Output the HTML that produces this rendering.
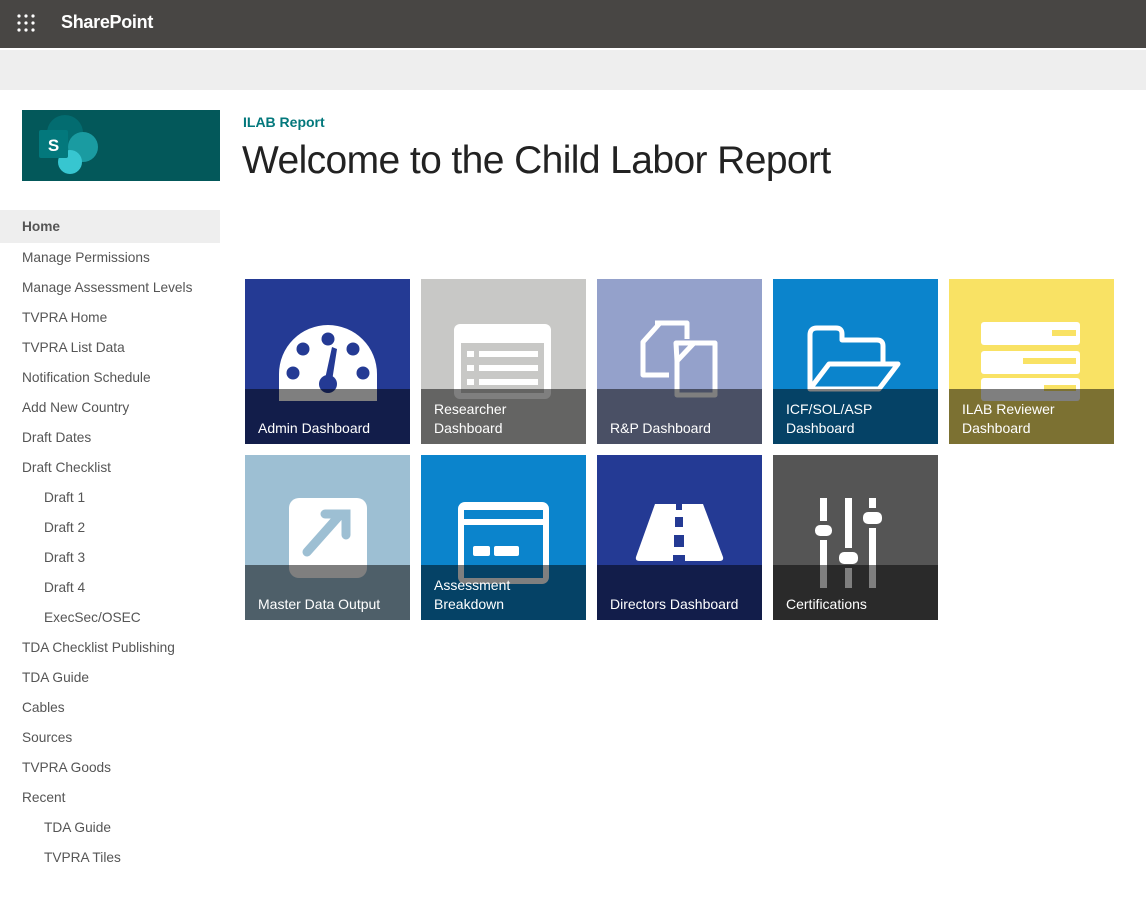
<!DOCTYPE html>
<html><head><meta charset="utf-8"><style>
*{margin:0;padding:0;box-sizing:border-box}
body{width:1146px;height:897px;background:#fff;font-family:"Liberation Sans",sans-serif;position:relative;overflow:hidden}
.top{position:absolute;left:0;top:0;width:1146px;height:48px;background:#484644}
.bar{position:absolute;left:0;top:50px;width:1146px;height:40px;background:#eeeeee}
.logo{position:absolute;left:22px;top:110px;width:198px;height:71px;background:#03585a}
.nav{position:absolute;left:0;top:210px;width:220px}
.nav div{height:30px;line-height:30px;font-size:13.7px;color:#555;padding-left:22px}
.nav div.home{background:#eeeeee;font-weight:bold;color:#555;height:33px;line-height:33px}
.nav div.sub{padding-left:44px}
.tile{position:absolute;width:165px;height:165px;overflow:hidden}
.tile svg{position:absolute;left:0;top:0}
.ov{position:absolute;left:0;top:110px;width:165px;height:55px;background:rgba(0,0,0,0.5);color:#fff;font-size:14px;line-height:19px;padding:0 13px 6px;display:flex;align-items:flex-end}
</style></head><body>
<div class="top">
<svg style="position:absolute;left:17px;top:14px" width="20" height="20"><g fill="#fff"><circle cx="2" cy="2" r="1.6"/><circle cx="9" cy="2" r="1.6"/><circle cx="16" cy="2" r="1.6"/><circle cx="2" cy="9" r="1.6"/><circle cx="9" cy="9" r="1.6"/><circle cx="16" cy="9" r="1.6"/><circle cx="2" cy="16" r="1.6"/><circle cx="9" cy="16" r="1.6"/><circle cx="16" cy="16" r="1.6"/></g></svg>
<div style="position:absolute;left:61px;top:12px;color:#fff;font-size:18px;font-weight:bold;letter-spacing:-0.3px">SharePoint</div>
</div>
<div class="bar"></div>
<div class="logo"><svg width="198" height="71">
<circle cx="43" cy="23" r="18" fill="#036c70"/><circle cx="61" cy="37" r="15" fill="#1a9ba1"/><circle cx="48" cy="52" r="12" fill="#37c6d0"/>
<rect x="17" y="20" width="29" height="28" rx="2" fill="#03787c"/><text x="31.5" y="41" fill="#fff" font-size="17" font-weight="bold" text-anchor="middle" font-family="Liberation Sans">S</text></svg></div>
<div style="position:absolute;left:243px;top:114px;font-size:14px;font-weight:bold;color:#03787c">ILAB Report</div>
<div style="position:absolute;left:242px;top:139px;font-size:39px;color:#222;font-weight:300;letter-spacing:-0.6px">Welcome to the Child Labor Report</div>
<div class="nav">
<div class="home">Home</div><div>Manage Permissions</div><div>Manage Assessment Levels</div><div>TVPRA Home</div><div>TVPRA List Data</div><div>Notification Schedule</div><div>Add New Country</div><div>Draft Dates</div><div>Draft Checklist</div><div class="sub">Draft 1</div><div class="sub">Draft 2</div><div class="sub">Draft 3</div><div class="sub">Draft 4</div><div class="sub">ExecSec/OSEC</div><div>TDA Checklist Publishing</div><div>TDA Guide</div><div>Cables</div><div>Sources</div><div>TVPRA Goods</div><div>Recent</div><div class="sub">TDA Guide</div><div class="sub">TVPRA Tiles</div>
</div>

<div class="tile" style="left:245px;top:279px;background:#243a94"><svg width="165" height="165">
<path d="M34 122 L34 95 A49 49 0 0 1 132 95 L132 122 Z" fill="#fff"/>
<g fill="#243a94"><circle cx="83" cy="60" r="6.5"/><circle cx="58" cy="70" r="6.5"/><circle cx="108" cy="70" r="6.5"/><circle cx="48" cy="94" r="6.5"/><circle cx="118" cy="94" r="6.5"/><circle cx="83" cy="105" r="9"/><path d="M87 68 L92 70 L87 102 L80 100 Z"/></g></svg><div class="ov">Admin Dashboard</div></div>

<div class="tile" style="left:421px;top:279px;background:#c8c8c6"><svg width="165" height="165">
<rect x="33" y="45" width="97" height="75" rx="6" fill="#fff"/><rect x="40" y="64" width="83" height="50" fill="#c8c8c6"/>
<g fill="#fff"><rect x="46" y="72" width="7" height="6"/><rect x="58" y="72" width="59" height="6"/><rect x="46" y="86" width="7" height="6"/><rect x="58" y="86" width="59" height="6"/><rect x="46" y="100" width="7" height="6"/><rect x="58" y="100" width="59" height="6"/></g></svg><div class="ov">Researcher<br>Dashboard</div></div>

<div class="tile" style="left:597px;top:279px;background:#94a1cb"><svg width="165" height="165">
<g fill="none" stroke="#fff" stroke-width="5" stroke-linejoin="round"><path d="M58 44 L90 44 L90 60 M72 96 L46 96 L46 63 L63 44"/><path d="M79 64 L118 64 L118 116 L80 116 L80 82 Z M80 82 L97 64"/></g></svg><div class="ov">R&amp;P Dashboard</div></div>

<div class="tile" style="left:773px;top:279px;background:#0b84cc"><svg width="165" height="165">
<path d="M37 110 L37 56 Q37 49 44 49 L63 49 Q69 49 69 55 L69 61 L104 61 Q110 61 110 67 L110 83 M37 110 L56 85 L125 85 L106 110 Z" fill="none" stroke="#fff" stroke-width="5" stroke-linejoin="round"/></svg><div class="ov">ICF/SOL/ASP<br>Dashboard</div></div>

<div class="tile" style="left:949px;top:279px;background:#f9e264"><svg width="165" height="165">
<g fill="#fff"><rect x="32" y="43" width="99" height="23" rx="3"/><rect x="32" y="72" width="99" height="23" rx="3"/><rect x="32" y="99" width="99" height="23" rx="3"/></g>
<g fill="#f9e264"><rect x="103" y="51" width="24" height="6"/><rect x="74" y="79" width="53" height="6"/><rect x="95" y="106" width="32" height="6"/></g></svg><div class="ov">ILAB Reviewer<br>Dashboard</div></div>

<div class="tile" style="left:245px;top:455px;background:#9dbfd3"><svg width="165" height="165">
<rect x="44" y="43" width="78" height="80" rx="10" fill="#fff"/>
<path d="M62 97 L94 61 M80 59 L101 59 L101 80" fill="none" stroke="#9dbfd3" stroke-width="9" stroke-linecap="round"/></svg><div class="ov">Master Data Output</div></div>

<div class="tile" style="left:421px;top:455px;background:#0b84cc"><svg width="165" height="165">
<rect x="37" y="47" width="91" height="82" rx="7" fill="#fff"/><rect x="43" y="55" width="79" height="9" fill="#0b84cc"/><rect x="43" y="70" width="79" height="53" fill="#0b84cc"/>
<g fill="#fff"><rect x="52" y="91" width="17" height="10" rx="2"/><rect x="73" y="91" width="25" height="10" rx="2"/></g></svg><div class="ov">Assessment<br>Breakdown</div></div>

<div class="tile" style="left:597px;top:455px;background:#243a94"><svg width="165" height="165">
<path d="M58 49 L106 49 L126 102 Q127 106 122 106 L43 106 Q38 106 39 102 Z" fill="#fff"/>
<g fill="#243a94"><rect x="79" y="49" width="6" height="6"/><rect x="78" y="62" width="8" height="10"/><rect x="77" y="80" width="10" height="12"/><rect x="76" y="100" width="12" height="6"/></g></svg><div class="ov">Directors Dashboard</div></div>

<div class="tile" style="left:773px;top:455px;background:#555"><svg width="165" height="165">
<g fill="#fff"><rect x="47" y="43" width="7" height="90"/><rect x="72" y="43" width="7" height="90"/><rect x="96" y="43" width="7" height="90"/>
<rect x="42" y="70" width="17" height="11" rx="5"/><rect x="66" y="97" width="19" height="12" rx="5"/><rect x="90" y="57" width="19" height="12" rx="5"/></g>
<g fill="#555"><rect x="47" y="66" width="7" height="4"/><rect x="47" y="81" width="7" height="4"/><rect x="72" y="93" width="7" height="4"/><rect x="72" y="109" width="7" height="4"/><rect x="96" y="53" width="7" height="4"/><rect x="96" y="69" width="7" height="4"/></g></svg><div class="ov">Certifications</div></div>
</body></html>
